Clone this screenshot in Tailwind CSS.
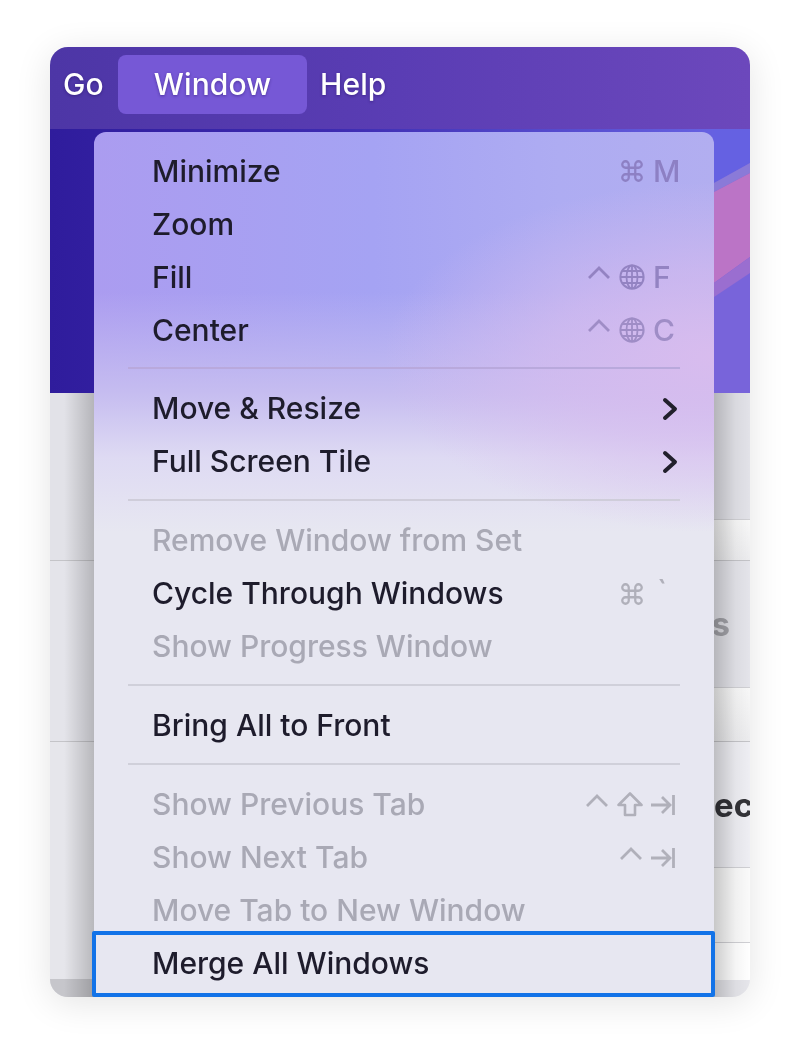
<!DOCTYPE html>
<html>
<head>
<meta charset="utf-8">
<script src="https://cdn.jsdelivr.net/npm/@tailwindcss/browser@4"></script>
</head>
<body class="bg-white font-['Inter','Liberation_Sans',sans-serif]">
<div class="w-[800px] h-[1045px] pt-[47px] pl-[50px] overflow-hidden">
  <div class="relative w-[700px] h-[950px] rounded-[18px] overflow-hidden shadow-[0_6px_36px_rgba(0,0,0,0.11)] bg-[#e6e6eb] blur-[0.4px]">
    <!-- menu bar -->
    <div class="h-[82px] flex items-start pt-[8px] text-white text-[30px] tracking-[0.1px] font-medium bg-[linear-gradient(90deg,#4d36a6_0%,#5a3db4_50%,#6c48bc_100%)] [text-shadow:0_1px_3px_rgba(30,10,90,0.45)]">
      <div class="w-[68px] h-[59px] flex items-center pl-[13px]">Go</div>
      <div class="w-[189px] h-[59px] flex items-center justify-center rounded-[8px] bg-[#7658d6]">Window</div>
      <div class="h-[59px] flex items-center pl-[13px]">Help</div>
    </div>
    <!-- wallpaper -->
    <div class="relative h-[264px] overflow-hidden bg-[linear-gradient(90deg,#2f1c9c_0%,#3d2bb0_40%,#6a66e6_100%)]">
      <svg class="absolute right-0 top-0 w-[36px] h-[264px]" viewBox="0 0 36 264">
        <rect width="36" height="264" fill="#7864da"/>
        <polygon points="0,0 36,0 36,34 0,54" fill="#6561e2"/>
        <polygon points="0,54 36,34 36,44 0,63" fill="#8a7ad8"/>
        <polygon points="0,63 36,44 36,128 0,154" fill="#bb74c6"/>
        <polygon points="0,154 36,128 36,144 0,168" fill="#9a6ed0"/>
      </svg>
    </div>
    <!-- content rows behind the menu -->
    <div class="h-[168px] flex flex-col justify-end bg-[#e2e2e8] border-b border-[#c4c4c8]">
      <div class="h-[41px] ml-[400px] bg-[linear-gradient(180deg,#f8f8f8,#ececee)] border-t border-[#d0d0d4]"></div>
    </div>
    <div class="relative h-[181px] flex flex-col justify-end bg-[#e4e4ea] border-b border-[#c4c4c8] overflow-hidden">
      <span class="absolute right-[20px] top-[38px] text-[33px] leading-[50px] font-bold text-[#a4a4aa]">s</span>
      <div class="h-[54px] ml-[400px] bg-[linear-gradient(180deg,#f8f8f8,#ececee)] border-t border-[#d0d0d4]"></div>
    </div>
    <div class="h-[126px] ml-[400px] flex justify-end bg-[#eeeef3] border-b border-[#d0d0d4]">
      <div class="w-[36px] pt-[38px] overflow-hidden text-[33px] leading-[50px] font-bold text-[#333338] whitespace-nowrap">ec</div>
    </div>
    <div class="h-[75px] ml-[400px] bg-[#fafafa] border-b border-[#d0d0d4]"></div>
    <div class="h-[37px] ml-[400px] bg-white"></div>
    <div class="absolute left-0 bottom-0 w-[44px] h-[18px] bg-[#c6c6cb]"></div>
    <!-- shadow of the menu -->
    <div class="absolute left-[14px] top-[346px] w-[30px] h-[604px] bg-[linear-gradient(90deg,rgba(0,0,0,0),rgba(0,0,0,0.2))]"></div>
    <div class="absolute left-[664px] top-[346px] w-[36px] h-[604px] bg-[linear-gradient(90deg,rgba(0,0,0,0.2),rgba(0,0,0,0.04)_60%,rgba(0,0,0,0))]"></div>
    <!-- menu -->
    <div class="absolute left-[44px] top-[85px] w-[620px] h-[865px] rounded-t-[12px] pt-[12.5px] pr-[34px] pl-[58px] text-[30px] font-[450] leading-[53px] text-[#1e1c2c] bg-[radial-gradient(ellipse_330px_175px_at_620px_225px,#d8bcee_0%,rgba(216,188,238,0.6)_50%,rgba(216,188,238,0)_100%),linear-gradient(180deg,rgba(198,189,240,0)_160px,#c6bdf0_262px,#dedaf3_325px,#e7e7f1_400px,#e7e7f1_100%),linear-gradient(90deg,#ab9cf0_0%,#a5a3f3_45%,#aeacf2_75%,#b2aef0_100%)]">
      <div class="h-[53px] flex items-center justify-between"><span>Minimize</span>
        <div class="flex items-center text-[#8d80c4]">
          <svg class="w-[26px] h-[26px] mr-[8px]" viewBox="0 0 24 24" fill="none" stroke="#8d80c4" stroke-width="2.1"><path d="M15 6v12a3 3 0 1 0 3-3H6a3 3 0 1 0 3 3V6a3 3 0 1 0-3 3h12a3 3 0 1 0-3-3"/></svg>
          <span class="w-[27px]">M</span>
        </div>
      </div>
      <div class="h-[53px] flex items-center"><span>Zoom</span></div>
      <div class="h-[53px] flex items-center justify-between"><span>Fill</span>
        <div class="flex items-center text-[#9383c2]">
          <svg class="w-[22px] h-[14px] mr-[9px] mb-[8px]" viewBox="0 0 22 14" fill="none" stroke="#9383c2" stroke-width="2.8"><path d="M1 12 11 2l10 10"/></svg>
          <svg class="w-[26px] h-[26px] mr-[8px]" viewBox="0 0 26 26" fill="none" stroke="#9383c2" stroke-width="1.8"><circle cx="13" cy="13" r="11.6" stroke-width="2"/><ellipse cx="13" cy="13" rx="5.5" ry="11.6"/><path d="M13 1.4v23.2M1.4 13h23.2M3 7h20M3 19h20"/></svg>
          <span class="w-[27px]">F</span>
        </div>
      </div>
      <div class="h-[53px] flex items-center justify-between"><span>Center</span>
        <div class="flex items-center text-[#9f8dc6]">
          <svg class="w-[22px] h-[14px] mr-[9px] mb-[8px]" viewBox="0 0 22 14" fill="none" stroke="#9f8dc6" stroke-width="2.8"><path d="M1 12 11 2l10 10"/></svg>
          <svg class="w-[26px] h-[26px] mr-[8px]" viewBox="0 0 26 26" fill="none" stroke="#9f8dc6" stroke-width="1.8"><circle cx="13" cy="13" r="11.6" stroke-width="2"/><ellipse cx="13" cy="13" rx="5.5" ry="11.6"/><path d="M13 1.4v23.2M1.4 13h23.2M3 7h20M3 19h20"/></svg>
          <span class="w-[27px]">C</span>
        </div>
      </div>
      <div class="h-[25.5px] flex items-center pb-[3px] -ml-[24px]"><div class="w-full h-[2px] bg-[#b9a9dc]"></div></div>

      <div class="h-[53px] flex items-center justify-between"><span>Move &amp; Resize</span>
        <svg class="w-[16px] h-[24px] mr-[2px]" viewBox="0 0 16 24" fill="none" stroke="#22202c" stroke-width="4" stroke-linecap="round" stroke-linejoin="round"><path d="M3 3l10 9-10 9"/></svg>
      </div>
      <div class="h-[53px] flex items-center justify-between"><span>Full Screen Tile</span>
        <svg class="w-[16px] h-[24px] mr-[2px]" viewBox="0 0 16 24" fill="none" stroke="#22202c" stroke-width="4" stroke-linecap="round" stroke-linejoin="round"><path d="M3 3l10 9-10 9"/></svg>
      </div>
      <div class="h-[26px] flex items-center pb-[2px] -ml-[24px]"><div class="w-full h-[2px] bg-[#cfcdda]"></div></div>

      <div class="h-[53px] flex items-center text-[#a9a9b5]"><span>Remove Window from Set</span></div>
      <div class="h-[53px] flex items-center justify-between"><span>Cycle Through Windows</span>
        <div class="flex items-center text-[#b0b0ba]">
          <svg class="w-[26px] h-[26px] mr-[8px]" viewBox="0 0 24 24" fill="none" stroke="#b0b0ba" stroke-width="2.1"><path d="M15 6v12a3 3 0 1 0 3-3H6a3 3 0 1 0 3 3V6a3 3 0 1 0-3 3h12a3 3 0 1 0-3-3"/></svg>
          <span class="w-[27px] pl-[4px] pt-[2px] leading-[20px] h-[30px]">`</span>
        </div>
      </div>
      <div class="h-[53px] flex items-center text-[#a9a9b5]"><span>Show Progress Window</span></div>
      <div class="h-[26px] flex items-center pb-[2px] -ml-[24px]"><div class="w-full h-[2px] bg-[#d0d0da]"></div></div>

      <div class="h-[53px] flex items-center"><span>Bring All to Front</span></div>
      <div class="h-[26px] flex items-center pb-[2px] -ml-[24px]"><div class="w-full h-[2px] bg-[#d0d0da]"></div></div>

      <div class="h-[53px] flex items-center justify-between text-[#a9a9b5]"><span>Show Previous Tab</span>
        <div class="flex items-center">
          <svg class="w-[22px] h-[14px] mr-[9px] mb-[8px]" viewBox="0 0 22 14" fill="none" stroke="#b0b0ba" stroke-width="2.8"><path d="M1 12 11 2l10 10"/></svg>
          <svg class="w-[26px] h-[25px] mr-[8px]" viewBox="0 0 26 25" fill="none" stroke="#b0b0ba" stroke-width="2.6" stroke-linejoin="round"><path d="M13 1.5 24.5 13H18v10H8V13H1.5z"/></svg>
          <svg class="w-[24px] h-[20px] mr-[5px]" viewBox="0 0 24 20" fill="none" stroke="#b0b0ba" stroke-width="2.8"><path d="M0 10h19M11 2l8 8-8 8M22.5 0v20"/></svg>
        </div>
      </div>
      <div class="h-[53px] flex items-center justify-between text-[#a9a9b5]"><span>Show Next Tab</span>
        <div class="flex items-center">
          <svg class="w-[22px] h-[14px] mr-[9px] mb-[8px]" viewBox="0 0 22 14" fill="none" stroke="#b0b0ba" stroke-width="2.8"><path d="M1 12 11 2l10 10"/></svg>
          <svg class="w-[24px] h-[20px] mr-[5px]" viewBox="0 0 24 20" fill="none" stroke="#b0b0ba" stroke-width="2.8"><path d="M0 10h19M11 2l8 8-8 8M22.5 0v20"/></svg>
        </div>
      </div>
      <div class="h-[53px] flex items-center text-[#a9a9b5]"><span>Move Tab to New Window</span></div>
      <div class="h-[53px] flex items-center"><span>Merge All Windows</span></div>
    </div>
    <!-- highlight -->
    <div class="absolute left-[42px] top-[884px] w-[623px] h-[66px] border-[4px] border-[#1273e8] rounded-[2px]"></div>
  </div>
</div>
</body>
</html>
